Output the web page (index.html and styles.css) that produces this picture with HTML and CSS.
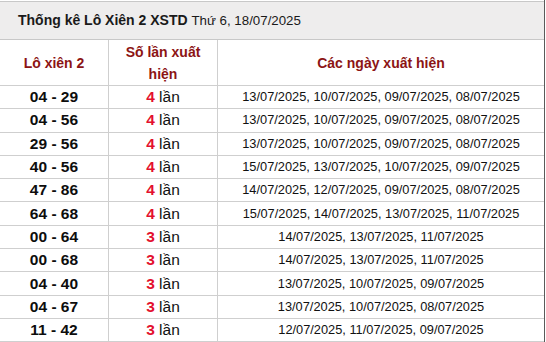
FILE: index.html
```html
<!DOCTYPE html>
<html lang="vi">
<head>
<meta charset="utf-8">
<title>Thống kê Lô Xiên 2 XSTD</title>
<link rel="stylesheet" href="styles.css">
</head>
<body>
<div class="panel">
  <div class="title"><b>Thống kê Lô Xiên 2 XSTD</b> <span class="day">Thứ 6, 18/07/2025</span></div>
  <table class="stats">
    <colgroup><col class="c1"><col class="c2"><col class="c3"></colgroup>
    <thead>
      <tr><th>Lô xiên 2</th><th>Số lần xuất hiện</th><th>Các ngày xuất hiện</th></tr>
    </thead>
    <tbody>
      <tr><td class="pair">04 - 29</td><td class="count"><b>4</b> lần</td><td class="dates">13/07/2025, 10/07/2025, 09/07/2025, 08/07/2025</td></tr>
      <tr><td class="pair">04 - 56</td><td class="count"><b>4</b> lần</td><td class="dates">13/07/2025, 10/07/2025, 09/07/2025, 08/07/2025</td></tr>
      <tr><td class="pair">29 - 56</td><td class="count"><b>4</b> lần</td><td class="dates">13/07/2025, 10/07/2025, 09/07/2025, 08/07/2025</td></tr>
      <tr><td class="pair">40 - 56</td><td class="count"><b>4</b> lần</td><td class="dates">15/07/2025, 13/07/2025, 10/07/2025, 09/07/2025</td></tr>
      <tr><td class="pair">47 - 86</td><td class="count"><b>4</b> lần</td><td class="dates">14/07/2025, 12/07/2025, 09/07/2025, 08/07/2025</td></tr>
      <tr><td class="pair">64 - 68</td><td class="count"><b>4</b> lần</td><td class="dates">15/07/2025, 14/07/2025, 13/07/2025, 11/07/2025</td></tr>
      <tr><td class="pair">00 - 64</td><td class="count"><b>3</b> lần</td><td class="dates">14/07/2025, 13/07/2025, 11/07/2025</td></tr>
      <tr><td class="pair">00 - 68</td><td class="count"><b>3</b> lần</td><td class="dates">14/07/2025, 13/07/2025, 11/07/2025</td></tr>
      <tr><td class="pair">04 - 40</td><td class="count"><b>3</b> lần</td><td class="dates">13/07/2025, 10/07/2025, 09/07/2025</td></tr>
      <tr><td class="pair">04 - 67</td><td class="count"><b>3</b> lần</td><td class="dates">13/07/2025, 10/07/2025, 08/07/2025</td></tr>
      <tr><td class="pair">11 - 42</td><td class="count"><b>3</b> lần</td><td class="dates">12/07/2025, 11/07/2025, 09/07/2025</td></tr>
    </tbody>
  </table>
</div>
</body>
</html>
```
FILE: styles.css
```css
html, body {
  margin: 0;
  padding: 0;
  background: #fff;
}
body {
  font-family: "Liberation Sans", Arial, sans-serif;
  color: #111;
}
.panel {
  box-sizing: border-box;
  width: 545px;
  padding-top: 1px;
  border-right: 1px solid #5a5a5a;
  overflow: hidden;
}
.title {
  box-sizing: border-box;
  height: 39px;
  padding-left: 18px;
  background: #eeeded;
  border-top: 1px solid #c8c8c8;
  border-bottom: 1px solid #c8c8c8;
  font-size: 14px;
  line-height: 37px;
  color: #1a1a1a;
}
.title b {
  font-weight: bold;
}
.title .day {
  font-size: 13.3px;
}
.stats {
  width: 545px;
  margin-left: -1px;
  border-collapse: collapse;
  table-layout: fixed;
}
.c1 { width: 109px; }
.c2 { width: 109px; }
.c3 { width: 327px; }
.stats th,
.stats td {
  border: 1px solid #cfcfcf;
  padding: 0 4px;
  text-align: center;
  vertical-align: middle;
}
.stats thead tr:first-child th {
  border-top: none;
}
.stats th {
  height: 45px;
  color: #8c1414;
  font-size: 14px;
  font-weight: bold;
  line-height: 22px;
}
.stats th:nth-child(2) {
  padding: 0 14px;
}
.stats td {
  height: 22.3px;
  line-height: 18px;
}
.pair {
  font-size: 15.5px;
  font-weight: bold;
  color: #0d0d0d;
}
.count {
  font-size: 15.5px;
  color: #111;
}
.count b {
  color: #e3102e;
  font-weight: bold;
}
.dates {
  font-size: 12.8px;
  color: #111;
}
```
